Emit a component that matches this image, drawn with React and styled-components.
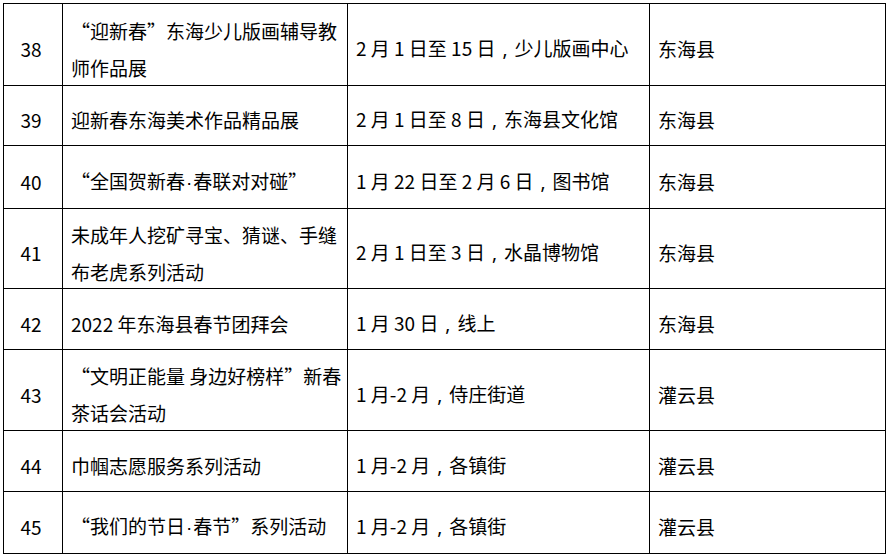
import React from 'react'
import { styled, createGlobalStyle } from 'styled-components'

const GlobalStyle = createGlobalStyle`
  html, body {
    margin: 0;
    padding: 0;
    background: #fff;
  }
`

const Page = styled.div`
  padding: 3px 0 0 3px;
  font-family: "Noto Sans CJK SC", "Noto Sans", sans-serif;
  color: #000;
`

const Grid = styled.div`
  display: grid;
  grid-template-columns: 58px 284px 301px 235px;
  grid-template-rows: ${p => p.$rows};
  gap: 1px;
  padding: 1px;
  width: max-content;
  background: #000;
`

const Cell = styled.div`
  background: #fff;
  display: flex;
  flex-direction: column;
  justify-content: center;
  align-items: ${p => (p.$center ? 'center' : 'flex-start')};
  padding: 8px ${p => (p.$center ? '4px' : '8px')} 0 ${p => (p.$center ? '0' : '8px')};
  font-size: 19px;
  line-height: 37px;
  white-space: nowrap;
  overflow: hidden;
`

const Line = styled.span`
  display: block;
`

// narrow western middle dot, as in the source document
const Dot = styled.span`
  font-family: "Liberation Sans", sans-serif;
  margin: 0 1px;
`

// full-width comma with the mark sitting in the middle of its box
const Comma = styled.span`
  display: inline-block;
  width: 1em;
  text-align: center;
  font-family: "Noto Sans", sans-serif;
`

const rich = text =>
  text.split(/([·，])/).map((part, i) => {
    if (part === '·') return <Dot key={i}>·</Dot>
    if (part === '，') return <Comma key={i}>,</Comma>
    return part
  })

const rows = [
  { no: 38, name: ['“迎新春”东海少儿版画辅导教', '师作品展'], time: '2 月 1 日至 15 日，少儿版画中心', area: '东海县', h: 81 },
  { no: 39, name: ['迎新春东海美术作品精品展'], time: '2 月 1 日至 8 日，东海县文化馆', area: '东海县', h: 59 },
  { no: 40, name: ['“全国贺新春·春联对对碰”'], time: '1 月 22 日至 2 月 6 日，图书馆', area: '东海县', h: 62 },
  { no: 41, name: ['未成年人挖矿寻宝、猜谜、手缝', '布老虎系列活动'], time: '2 月 1 日至 3 日，水晶博物馆', area: '东海县', h: 79 },
  { no: 42, name: ['2022 年东海县春节团拜会'], time: '1 月 30 日，线上', area: '东海县', h: 60 },
  { no: 43, name: ['“文明正能量 身边好榜样”新春', '茶话会活动'], time: '1 月-2 月，侍庄街道', area: '灌云县', h: 80 },
  { no: 44, name: ['巾帼志愿服务系列活动'], time: '1 月-2 月，各镇街', area: '灌云县', h: 60 },
  { no: 45, name: ['“我们的节日·春节”系列活动'], time: '1 月-2 月，各镇街', area: '灌云县', h: 61 },
]

export default function App() {
  return (
    <Page>
      <GlobalStyle />
      <Grid $rows={rows.map(r => `${r.h}px`).join(' ')}>
        {rows.map(r => (
          <React.Fragment key={r.no}>
            <Cell $center>{r.no}</Cell>
            <Cell>
              {r.name.map(l => (
                <Line key={l}>{rich(l)}</Line>
              ))}
            </Cell>
            <Cell>
              <Line>{rich(r.time)}</Line>
            </Cell>
            <Cell>{r.area}</Cell>
          </React.Fragment>
        ))}
      </Grid>
    </Page>
  )
}
